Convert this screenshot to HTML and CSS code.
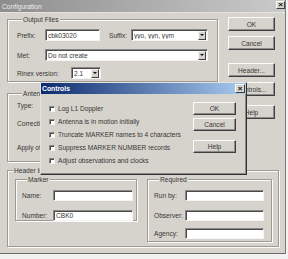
FILE: index.html
```html
<!DOCTYPE html>
<html>
<head>
  <meta charset="utf-8">
  <title>Configuration</title>
  <link rel="stylesheet" href="styles.css">
</head>
<body>
  <div class="window">
    <div class="titlebar">
      <span>Configuration</span>
      <span class="xbtn">&#215;</span>
    </div>
    <div class="content">
      <div class="top">
        <div class="left">
          <div class="group output">
            <div class="legend">Output Files</div>
            <div class="row r1">
              <span class="lbl w28">Prefix:</span>
              <input class="field w55" type="text" value="cbk03020">
              <span class="lbl suffix-lbl">Suffix:</span>
              <div class="combo w77"><span class="val">yyo, yyn, yym</span><span class="arrow"></span></div>
            </div>
            <div class="row r2">
              <span class="lbl w28">Met:</span>
              <div class="combo w163"><span class="val">Do not create</span><span class="arrow"></span></div>
            </div>
            <div class="row r3">
              <span class="lbl w54">Rinex version:</span>
              <div class="combo w30"><span class="val">2.1</span><span class="arrow"></span></div>
            </div>
          </div>
          <div class="group antenna">
            <div class="legend">Antenna</div>
            <div class="row a1">
              <span class="lbl w28">Type:</span>
              <div class="combo w163"><span class="val"></span><span class="arrow"></span></div>
            </div>
            <div class="row a2">
              <span class="lbl w54">Corrections:</span>
            </div>
            <div class="row a3">
              <span class="lbl w54">Apply offsets:</span>
            </div>
          </div>
        </div>
        <div class="buttons">
          <div class="btn ok">OK</div>
          <div class="btn cancel">Cancel</div>
          <div class="btn header-btn">Header...</div>
          <div class="btn controls-btn">Controls...</div>
          <div class="btn help">Help</div>
        </div>
      </div>

      <div class="group header">
        <div class="legend">Header Information</div>
        <div class="hrow">
          <div class="group marker">
            <div class="legend">Marker</div>
            <div class="row m1">
              <span class="lbl w31">Name:</span>
              <input class="field w80" type="text" value="">
            </div>
            <div class="row m2">
              <span class="lbl w31">Number:</span>
              <input class="field w80" type="text" value="CBK0">
            </div>
          </div>
          <div class="group required">
            <div class="legend">Required</div>
            <div class="row q1">
              <span class="lbl w31">Run by:</span>
              <input class="field w79" type="text" value="">
            </div>
            <div class="row q2">
              <span class="lbl w31">Observer:</span>
              <input class="field w79" type="text" value="">
            </div>
            <div class="row q3">
              <span class="lbl w31">Agency:</span>
              <input class="field w79" type="text" value="">
            </div>
          </div>
        </div>
      </div>
    </div>

    <div class="dialog">
      <div class="dtitle">
        <span>Controls</span>
        <span class="xbtn dx">&#215;</span>
      </div>
      <div class="dbody">
        <div class="checks">
          <div class="check-row"><span class="check"></span>Log L1 Doppler</div>
          <div class="check-row"><span class="check"></span>Antenna is in motion initially</div>
          <div class="check-row"><span class="check"></span>Truncate MARKER names to 4 characters</div>
          <div class="check-row"><span class="check"></span>Suppress MARKER NUMBER records</div>
          <div class="check-row"><span class="check"></span>Adjust observations and clocks</div>
        </div>
        <div class="dbuttons">
          <div class="btn dbtn">OK</div>
          <div class="btn dbtn d-cancel">Cancel</div>
          <div class="btn dbtn d-help">Help</div>
        </div>
      </div>
    </div>
  </div>
</body>
</html>
```

FILE: styles.css
```css
* {
  box-sizing: border-box;
}

body {
  margin: 0;
  background-color: #f1f1f1;
  font-family: "Liberation Sans", Arial, sans-serif;
  font-size: 6.6px;
  color: #363636;
}

.window {
  position: relative;
  width: 286px;
  height: 254px;
  background-color: #d6d3cc;
  border-right: 1px solid #7a7a7a;
  border-bottom: 1px solid #6a6a6a;
}

.titlebar {
  display: flex;
  align-items: center;
  justify-content: space-between;
  height: 13px;
  padding: 0 0 0 2px;
  background: linear-gradient(to right, #8e8e8e, #cacaca);
  color: #ececec;
  font-size: 6.7px;
  border-bottom: 1px solid #e6e4df;
}

.xbtn {
  display: flex;
  align-items: center;
  justify-content: center;
  width: 9px;
  height: 8px;
  margin-top: -2px;
  background-color: #d6d3cc;
  border: 1px solid;
  border-color: #fff #404040 #404040 #fff;
  color: #111;
  font-size: 8px;
  font-weight: bold;
  line-height: 1;
}

.content {
  padding-left: 7px;
}

.top {
  display: flex;
}

.left {
  width: 211px;
}

/* group boxes */
.group {
  border: 1px solid #9d9a93;
  box-shadow: 1px 1px 0 #fbfbfb, inset 1px 1px 0 #fbfbfb;
}

.legend {
  width: fit-content;
  height: 8px;
  line-height: 8px;
  margin: -4px 0 0 5px;
  padding: 0 1px;
  background-color: #d6d3cc;
}

.row {
  display: flex;
  align-items: center;
  height: 12px;
}

.lbl {
  flex: none;
  white-space: nowrap;
}

.w28 { width: 28px; }
.w31 { width: 31px; }
.w54 { width: 54px; }
.w30 { width: 30px; }
.w55 { width: 55px; }
.w77 { width: 77px; }
.w79 { width: 79px; }
.w80 { width: 80px; }
.w163 { width: 163px; }

.field,
.combo {
  flex: none;
  height: 12px;
  margin: 0;
  padding: 0 2px;
  background-color: #fff;
  border: 1px solid;
  border-color: #8a8a8a #f4f4f4 #f4f4f4 #8a8a8a;
  box-shadow: inset 1px 1px 0 #4a4a4a;
  font-family: inherit;
  font-size: 6.6px;
  color: #363636;
  outline: none;
}

.combo {
  display: flex;
  align-items: center;
  justify-content: space-between;
  padding-right: 1px;
}

.val {
  white-space: nowrap;
  overflow: hidden;
}

.arrow {
  position: relative;
  flex: none;
  width: 8px;
  height: 9px;
  background-color: #d6d3cc;
  border: 1px solid;
  border-color: #f4f4f4 #404040 #404040 #f4f4f4;
}

.arrow::after {
  content: "";
  position: absolute;
  left: 1px;
  top: 2px;
  border-left: 2px solid transparent;
  border-right: 2px solid transparent;
  border-top: 2px solid #111;
}

/* output files */
.output {
  height: 63px;
  margin-top: 6px;
  padding-left: 9px;
}

.r1 { margin-top: 5px; }
.r2 { margin-top: 8px; }
.r3 { margin-top: 6px; }

.suffix-lbl {
  width: 22px;
  margin-left: 9px;
}

/* antenna */
.antenna {
  height: 69px;
  margin-top: 11px;
  padding-left: 9px;
}

.a1 { margin-top: 1px; }
.a2 { margin-top: 6px; }
.a3 { margin-top: 12px; }

/* right buttons */
.buttons {
  display: flex;
  flex-direction: column;
  width: 47px;
  margin-left: 10px;
  padding-top: 4px;
}

.btn {
  display: flex;
  align-items: center;
  justify-content: center;
  height: 14px;
  background-color: #d6d3cc;
  border: 1px solid;
  border-color: #fbfbfb #3e3e3e #3e3e3e #fbfbfb;
  box-shadow: inset -1px -1px 0 #8c8c8c;
  white-space: nowrap;
}

.cancel { margin-top: 5px; }
.header-btn { margin-top: 13px; }
.controls-btn { margin-top: 5px; }
.help { margin-top: 9px; }

/* header information */
.header {
  width: 272px;
  height: 77px;
  margin-top: 8px;
}

.hrow {
  display: flex;
  align-items: flex-start;
  padding-left: 7px;
}

.marker {
  width: 122px;
  height: 42px;
  margin-top: 4px;
  padding-left: 6px;
}

.required {
  width: 125px;
  height: 63px;
  margin-top: 4px;
  margin-left: 10px;
  padding-left: 6px;
}

.marker .row,
.required .row {
  height: 11px;
}

.marker .field,
.required .field {
  height: 11px;
}

.m1, .q1 { margin-top: 6px; }
.m2, .q2 { margin-top: 9px; }
.q3 { margin-top: 7px; }

/* controls dialog */
.dialog {
  position: absolute;
  left: 40px;
  top: 82px;
  width: 207px;
  height: 93px;
  background-color: #d6d3cc;
  border: 1px solid;
  border-color: #e4e2dd #303030 #303030 #e4e2dd;
  box-shadow: inset -1px -1px 0 #8a8a8a;
}

.dtitle {
  display: flex;
  align-items: center;
  justify-content: space-between;
  height: 11px;
  padding: 0 1px 0 1px;
  background: linear-gradient(to right, #0c2a6e, #a9cbf0);
  color: #fff;
  font-size: 6.8px;
  font-weight: bold;
}

.dx {
  width: 10px;
  height: 9px;
  margin-top: 0;
}

.dbody {
  display: flex;
}

.checks {
  flex: 1;
  padding: 8px 0 0 8px;
}

.check-row {
  display: flex;
  align-items: center;
  height: 13px;
  white-space: nowrap;
}

.check {
  flex: none;
  width: 6px;
  height: 6px;
  margin-right: 3px;
  background-color: #fff;
  border: 1px solid;
  border-color: #8a8a8a #f4f4f4 #f4f4f4 #8a8a8a;
  box-shadow: inset 1px 1px 0 #4a4a4a;
}

.dbuttons {
  display: flex;
  flex-direction: column;
  width: 43px;
  margin-right: 10px;
  padding-top: 8px;
}

.dbtn {
  height: 13px;
}

.d-cancel { margin-top: 3px; }
.d-help { margin-top: 9px; }
```
